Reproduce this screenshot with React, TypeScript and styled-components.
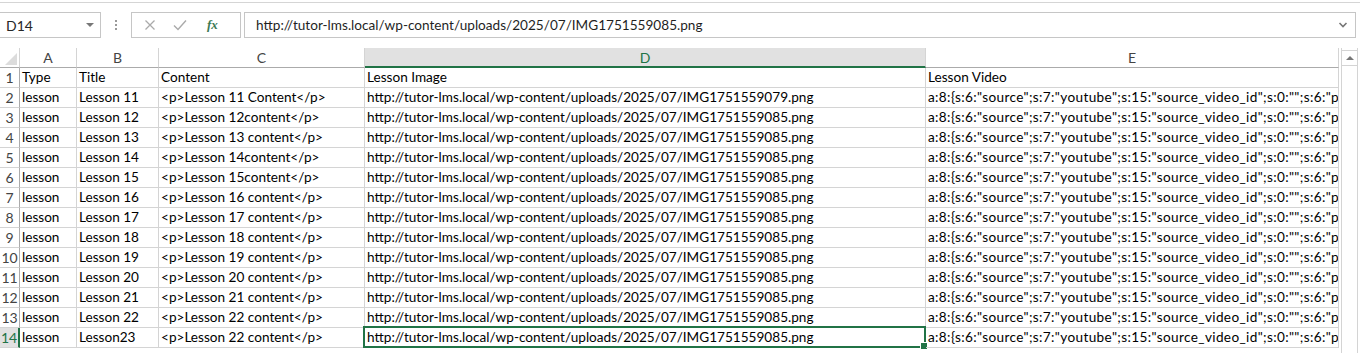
import React from 'react';
import styled, { createGlobalStyle } from 'styled-components';

const GlobalStyle = createGlobalStyle`
  html, body {
    margin: 0;
    padding: 0;
    background: #ffffff;
    overflow: hidden;
  }
  * {
    box-sizing: border-box;
  }
`;

const CELL_FONT = `'Lato', 'Liberation Sans', sans-serif`;
const GREEN = '#217346';
const COLS = '20px 57px 82px 206px 561px 413px';

const Page = styled.div`
  width: 1360px;
  height: 353px;
  background: #ffffff;
  display: flex;
  flex-direction: column;
  border-top: 1px solid transparent;
`;

const TopRule = styled.div`
  height: 1px;
  margin-top: 1px;
  background: #d5d5d5;
`;

const FormulaBar = styled.div`
  display: flex;
  align-items: center;
  height: 26px;
  margin-top: 9px;
  padding-right: 4px;
`;

const NameBox = styled.div`
  width: 101px;
  height: 26px;
  border: 1px solid #c6c6c6;
  border-left: none;
  display: flex;
  align-items: center;
  justify-content: space-between;
  padding: 0 5px 0 6px;
  font-family: ${CELL_FONT};
  font-size: 14px;
  color: #262626;
`;

const DropTriangle = styled.span`
  width: 0;
  height: 0;
  border-left: 4px solid transparent;
  border-right: 4px solid transparent;
  border-top: 4px solid #777;
  margin-right: 1px;
`;

const Dots = styled.div`
  width: 30px;
  display: flex;
  flex-direction: column;
  align-items: center;
  gap: 2px;
  span {
    width: 2px;
    height: 2px;
    background: #9a9a9a;
  }
`;

const ButtonGroup = styled.div`
  width: 110px;
  height: 26px;
  border: 1px solid #c6c6c6;
  display: flex;
  align-items: center;
  padding-left: 12px;
  gap: 17px;
`;

const FxLabel = styled.span`
  font-family: 'Liberation Serif', serif;
  font-style: italic;
  font-weight: bold;
  font-size: 13px;
  color: #3c7a55;
  margin-left: 3px;
`;

const FormulaInput = styled.div`
  flex: 1;
  height: 26px;
  margin-left: 3px;
  border: 1px solid #c6c6c6;
  display: flex;
  align-items: center;
  justify-content: space-between;
  padding: 0 7px 0 11px;
  font-family: ${CELL_FONT};
  font-size: 13.6px;
  color: #1f1f1f;
`;

const SheetArea = styled.div`
  display: flex;
  margin-top: 10px;
  flex: 1;
  min-height: 0;
`;

const Grid = styled.div`
  width: 1339px;
  display: flex;
  flex-direction: column;
`;

const Row = styled.div`
  display: grid;
  grid-template-columns: ${COLS};
  height: 20px;
`;

const HeadCell = styled.div<{ $active?: boolean }>`
  position: relative;
  display: flex;
  align-items: center;
  justify-content: center;
  font-family: ${CELL_FONT};
  font-size: 14px;
  color: ${p => (p.$active ? GREEN : '#444')};
  background: ${p => (p.$active ? '#e1e1e1' : '#ffffff')};
  border-right: 1px solid #d4d4d4;
  border-bottom: ${p => (p.$active ? `2px solid ${GREEN}` : '1px solid #ababab')};
  padding-top: ${p => (p.$active ? '1px' : '0')};
`;

const Corner = styled.div`
  position: relative;
  background: #ffffff;
  border-right: 1px solid #d4d4d4;
  border-bottom: 1px solid #ababab;
  &::after {
    content: '';
    position: absolute;
    right: 2px;
    bottom: 2px;
    width: 0;
    height: 0;
    border-left: 12px solid transparent;
    border-bottom: 12px solid #dcdcdc;
  }
`;

const RowNum = styled.div<{ $active?: boolean }>`
  display: flex;
  align-items: flex-end;
  justify-content: center;
  padding-bottom: 1px;
  font-family: ${CELL_FONT};
  font-size: 14px;
  line-height: 17px;
  color: ${p => (p.$active ? GREEN : '#444')};
  background: ${p => (p.$active ? '#e1e1e1' : '#ffffff')};
  border-right: ${p => (p.$active ? `2px solid ${GREEN}` : '1px solid #ababab')};
  border-bottom: 1px solid #d4d4d4;
`;

const Cell = styled.div<{ $wide?: boolean }>`
  position: relative;
  display: flex;
  align-items: flex-end;
  padding: 0 0 1px 2px;
  font-family: ${CELL_FONT};
  font-size: 13.6px;
  line-height: 17px;
  letter-spacing: ${p => (p.$wide ? '0.36px' : 'normal')};
  color: #000;
  white-space: nowrap;
  overflow: hidden;
  border-right: 1px solid #d4d4d4;
  border-bottom: 1px solid #d4d4d4;
`;

const ActiveCell = styled(Cell)`
  overflow: visible;
  &::before {
    content: '';
    position: absolute;
    left: -2px;
    top: -2px;
    right: -1px;
    bottom: -1px;
    border: 2px solid ${GREEN};
    pointer-events: none;
  }
  &::after {
    content: '';
    position: absolute;
    right: -3px;
    bottom: -3px;
    width: 6px;
    height: 6px;
    background: ${GREEN};
    border: 1px solid #fff;
  }
`;

const Scrollbar = styled.div`
  width: 17px;
  margin-left: 2px;
  border-left: 1px solid #d4d4d4;
  border-right: 1px solid #d4d4d4;
  display: flex;
  flex-direction: column;
`;

const ScrollUp = styled.div`
  height: 16px;
  margin-top: 2px;
  border-top: 1px solid #d4d4d4;
  border-bottom: 1px solid #d4d4d4;
  display: flex;
  align-items: center;
  justify-content: center;
  &::after {
    content: '';
    width: 0;
    height: 0;
    border-left: 4px solid transparent;
    border-right: 4px solid transparent;
    border-bottom: 4px solid #777;
  }
`;

const IconX = () => (
  <svg width="12" height="12" viewBox="0 0 12 12">
    <path d="M1.5 1.5 L10.5 10.5 M10.5 1.5 L1.5 10.5" stroke="#aaa" strokeWidth="1.3" fill="none" />
  </svg>
);

const IconCheck = () => (
  <svg width="14" height="12" viewBox="0 0 14 12">
    <path d="M1 6.5 L5 10.5 L13 1.5" stroke="#aaa" strokeWidth="1.4" fill="none" />
  </svg>
);

const Chevron = () => (
  <svg width="10" height="8" viewBox="0 0 10 8">
    <path d="M1.5 2 L5 5.5 L8.5 2" stroke="#777" strokeWidth="1.6" fill="none" />
  </svg>
);

const URL_BASE = 'http://tutor-lms.local/wp-content/uploads/2025/07/';
const VIDEO =
  'a:8:{s:6:"source";s:7:"youtube";s:15:"source_video_id";s:0:"";s:6:"poster";s:0:"";s:17:"source_external_url";s:0:"";}';

type Lesson = { title: string; content: string; img: string };

const lessons: Lesson[] = [
  { title: 'Lesson 11', content: '<p>Lesson 11 Content</p>', img: 'IMG1751559079.png' },
  { title: 'Lesson 12', content: '<p>Lesson 12content</p>', img: 'IMG1751559085.png' },
  { title: 'Lesson 13', content: '<p>Lesson 13 content</p>', img: 'IMG1751559085.png' },
  { title: 'Lesson 14', content: '<p>Lesson 14content</p>', img: 'IMG1751559085.png' },
  { title: 'Lesson 15', content: '<p>Lesson 15content</p>', img: 'IMG1751559085.png' },
  { title: 'Lesson 16', content: '<p>Lesson 16 content</p>', img: 'IMG1751559085.png' },
  { title: 'Lesson 17', content: '<p>Lesson 17 content</p>', img: 'IMG1751559085.png' },
  { title: 'Lesson 18', content: '<p>Lesson 18 content</p>', img: 'IMG1751559085.png' },
  { title: 'Lesson 19', content: '<p>Lesson 19 content</p>', img: 'IMG1751559085.png' },
  { title: 'Lesson 20', content: '<p>Lesson 20 content</p>', img: 'IMG1751559085.png' },
  { title: 'Lesson 21', content: '<p>Lesson 21 content</p>', img: 'IMG1751559085.png' },
  { title: 'Lesson 22', content: '<p>Lesson 22 content</p>', img: 'IMG1751559085.png' },
  { title: 'Lesson23', content: '<p>Lesson 22 content</p>', img: 'IMG1751559085.png' },
];

const columns = ['A', 'B', 'C', 'D', 'E'];

const App: React.FC = () => {
  return (
    <>
      <GlobalStyle />
      <Page>
        <TopRule />
        <FormulaBar>
          <NameBox>
            <span>D14</span>
            <DropTriangle />
          </NameBox>
          <Dots>
            <span />
            <span />
            <span />
          </Dots>
          <ButtonGroup>
            <IconX />
            <IconCheck />
            <FxLabel>fx</FxLabel>
          </ButtonGroup>
          <FormulaInput>
            <span>{URL_BASE}IMG1751559085.png</span>
            <Chevron />
          </FormulaInput>
        </FormulaBar>

        <SheetArea>
          <Grid>
            <Row>
              <Corner />
              {columns.map(c => (
                <HeadCell key={c} $active={c === 'D'}>
                  {c}
                </HeadCell>
              ))}
            </Row>
            <Row>
              <RowNum>1</RowNum>
              <Cell>Type</Cell>
              <Cell>Title</Cell>
              <Cell>Content</Cell>
              <Cell>Lesson Image</Cell>
              <Cell>Lesson Video</Cell>
            </Row>
            {lessons.map((l, i) => {
              const n = i + 2;
              const active = n === 14;
              const ImgCell = active ? ActiveCell : Cell;
              return (
                <Row key={n}>
                  <RowNum $active={active}>{n}</RowNum>
                  <Cell>lesson</Cell>
                  <Cell>{l.title}</Cell>
                  <Cell>{l.content}</Cell>
                  <ImgCell>
                    {URL_BASE}
                    {l.img}
                  </ImgCell>
                  <Cell $wide>{VIDEO}</Cell>
                </Row>
              );
            })}
          </Grid>
          <Scrollbar>
            <ScrollUp />
          </Scrollbar>
        </SheetArea>
      </Page>
    </>
  );
};

export default App;
